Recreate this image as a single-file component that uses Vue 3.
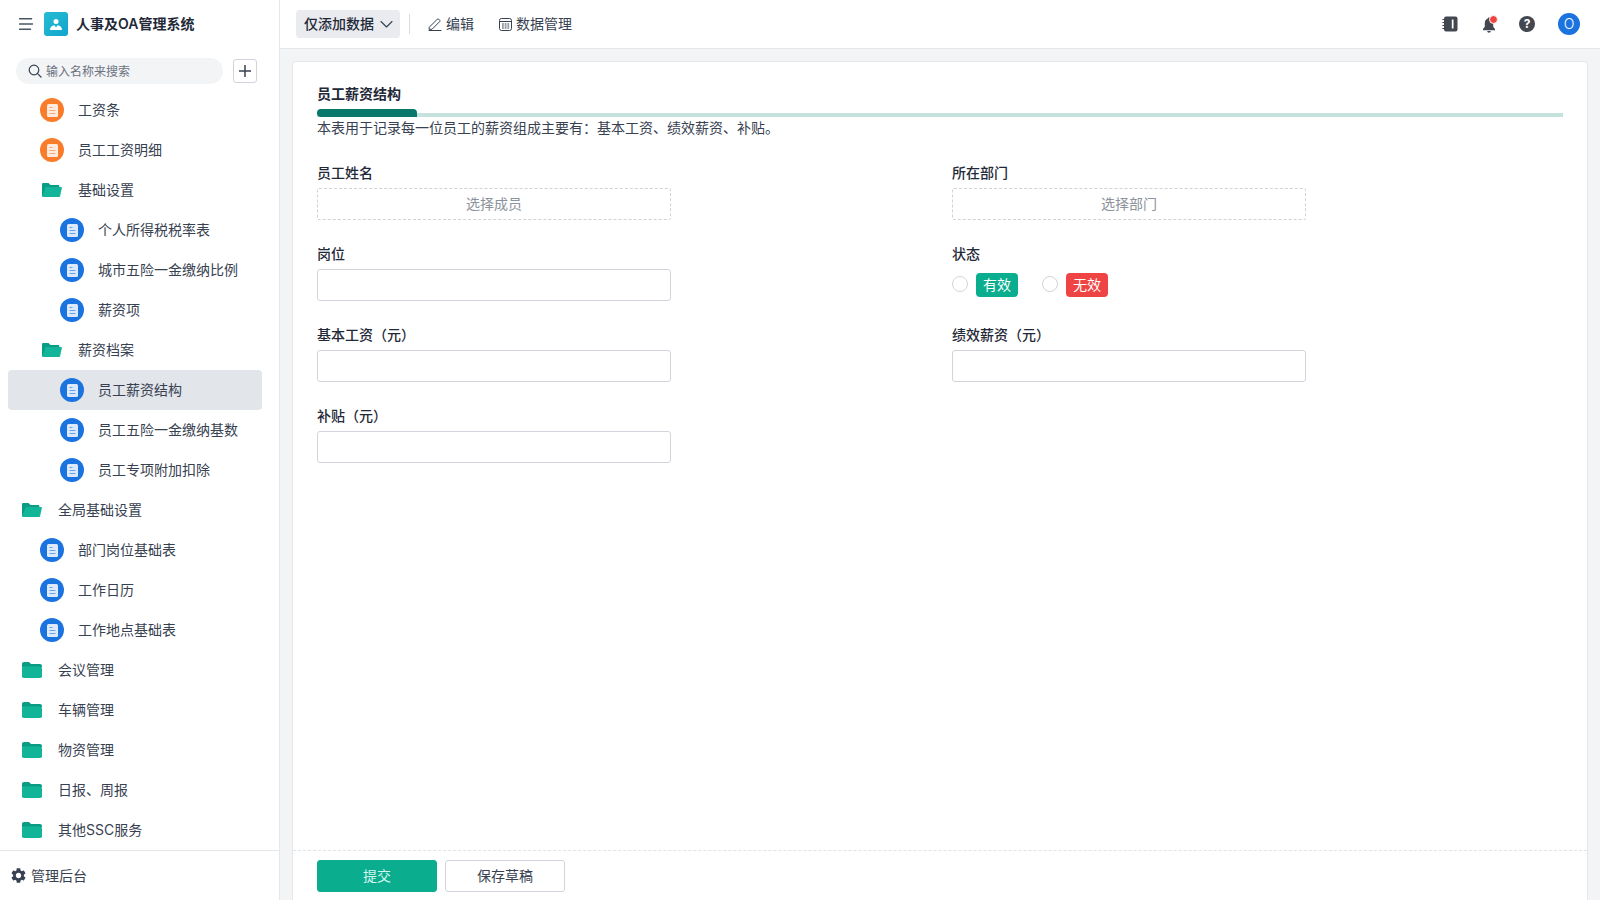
<script setup>
const tree = [
  { type: 'doc', color: 'orange', level: 1, name: '工资条' },
  { type: 'doc', color: 'orange', level: 1, name: '员工工资明细' },
  { type: 'open', level: 1, name: '基础设置' },
  { type: 'doc', color: 'blue', level: 2, name: '个人所得税税率表' },
  { type: 'doc', color: 'blue', level: 2, name: '城市五险一金缴纳比例' },
  { type: 'doc', color: 'blue', level: 2, name: '薪资项' },
  { type: 'open', level: 1, name: '薪资档案' },
  { type: 'doc', color: 'blue', level: 2, name: '员工薪资结构', active: true },
  { type: 'doc', color: 'blue', level: 2, name: '员工五险一金缴纳基数' },
  { type: 'doc', color: 'blue', level: 2, name: '员工专项附加扣除' },
  { type: 'open', level: 0, name: '全局基础设置' },
  { type: 'doc', color: 'blue', level: 1, name: '部门岗位基础表' },
  { type: 'doc', color: 'blue', level: 1, name: '工作日历' },
  { type: 'doc', color: 'blue', level: 1, name: '工作地点基础表' },
  { type: 'closed', level: 0, name: '会议管理' },
  { type: 'closed', level: 0, name: '车辆管理' },
  { type: 'closed', level: 0, name: '物资管理' },
  { type: 'closed', level: 0, name: '日报、周报' },
  { type: 'closed', level: 0, name: '其他SSC服务' },
]
</script>

<template>
  <div class="app">
    <aside class="sidebar">
      <div class="brand">
        <svg class="menu-icon" width="14" height="12" viewBox="0 0 14 12">
          <path d="M.6.7h12M.6 6h13M.6 11.300h11" stroke="#4b5563" stroke-width="1.400" stroke-linecap="round" fill="none" />
        </svg>
        <div class="logo">
          <svg width="12" height="11" viewBox="0 0 12 11" fill="#fff">
            <circle cx="6" cy="2.600" r="2.500" />
            <path d="M0 11c0-2.900 1.700-4.600 4.500-4.800L6 8.500l1.500-2.300C10.300 6.400 12 8.100 12 11z" />
          </svg>
        </div>
        <span class="brand-name">人事及OA管理系统</span>
      </div>
      <div class="search-row">
        <div class="search">
          <svg width="14" height="14" viewBox="0 0 14 14" fill="none" stroke="#374151" stroke-width="1.200">
            <circle cx="6" cy="6" r="4.800" />
            <path d="M9.600 9.600L13 13" stroke-linecap="round" />
          </svg>
          <span>输入名称来搜索</span>
        </div>
        <button class="add-btn">
          <svg width="14" height="14" viewBox="0 0 14 14">
            <path d="M7 1v12M1 7h12" stroke="#374151" stroke-width="1.500" />
          </svg>
        </button>
      </div>
      <nav class="tree">
        <div
          v-for="item in tree"
          :key="item.name"
          class="row"
          :class="['lv' + item.level, { active: item.active }]"
        >
          <span v-if="item.type === 'doc'" class="doc" :class="item.color">
            <svg width="11" height="13" viewBox="0 0 11 13">
              <rect width="11" height="13" rx="1.500" fill="#fff" fill-opacity=".85" />
              <path d="M2.500 3.500h3M2.500 6.500h6M2.500 9.500h6" stroke="currentColor" stroke-opacity=".6" stroke-width="1.200" />
            </svg>
          </span>
          <span v-else class="folder">
            <svg v-if="item.type === 'open'" width="20" height="14" viewBox="0 0 20 14">
              <path d="M0 1.200C0 .5.5 0 1.200 0h5.300l2 2h7.800c.6 0 1 .4 1 1v1.500H4.300L1.800 13.500H1.200C.5 13.500 0 13 0 12.300z" fill="#0a9c85" />
              <path d="M3.800 4h15.200c.6 0 1 .5.900 1.100l-1.800 7.900c-.1.600-.6 1-1.200 1H1c-.6 0-.9-.4-.8-1z" fill="#12b597" />
            </svg>
            <svg v-else width="20" height="16" viewBox="0 0 20 16">
              <path d="M0 2C0 .9.900 0 2 0h5l2 2h9c1.100 0 2 .9 2 2v1H0z" fill="#0a9c85" />
              <rect y="4.500" width="20" height="11.500" rx="1.800" fill="#12b597" />
            </svg>
          </span>
          <span class="row-label">{{ item.name }}</span>
        </div>
      </nav>
      <div class="side-foot">
        <svg width="15" height="15" viewBox="2.500 2 19 20" fill="#374151">
          <path d="M19.140 12.940c.04-.3.060-.61.060-.94 0-.32-.02-.64-.07-.94l2.030-1.580c.18-.14.23-.41.12-.61l-1.920-3.320c-.12-.22-.37-.29-.59-.22l-2.390.96c-.5-.38-1.030-.7-1.620-.94l-.36-2.540c-.04-.24-.24-.41-.48-.41h-3.840c-.24 0-.43.17-.47.41l-.36 2.540c-.59.24-1.130.57-1.620.94l-2.390-.96c-.22-.08-.47 0-.59.22L2.740 8.870c-.12.21-.08.47.12.61l2.030 1.580c-.05.3-.09.63-.09.94s.02.64.07.94l-2.030 1.580c-.18.14-.23.41-.12.61l1.920 3.320c.12.22.37.29.59.22l2.390-.96c.5.38 1.030.7 1.620.94l.36 2.540c.05.24.24.41.48.41h3.840c.24 0 .44-.17.47-.41l.36-2.540c.59-.24 1.130-.56 1.620-.94l2.390.96c.22.08.47 0 .59-.22l1.920-3.320c.12-.22.070-.47-.12-.61l-2.010-1.580zM12 15.600c-1.980 0-3.600-1.620-3.600-3.600s1.620-3.600 3.600-3.600 3.600 1.620 3.600 3.600-1.620 3.600-3.600 3.600z" />
        </svg>
        <span>管理后台</span>
      </div>
    </aside>

    <div class="main">
      <header class="topbar">
        <div class="view-select">
          <span>仅添加数据</span>
          <svg width="13" height="8" viewBox="0 0 13 8" fill="none" stroke="#374151" stroke-width="1.100">
            <path d="M1 1.500l5.500 5.500 5.500-5.500" stroke-linecap="round" stroke-linejoin="round" />
          </svg>
        </div>
        <div class="divider"></div>
        <div class="tool">
          <svg width="14" height="14" viewBox="0 0 14 14" fill="none" stroke="#374151" stroke-width="1">
            <path d="M1.500 10L9.300 2.200a1 1 0 011.400 0l1 1a1 1 0 010 1.400L4 12.300H1.500zM1 13.500h12" stroke-linejoin="round" stroke-linecap="round" />
          </svg>
          <span>编辑</span>
        </div>
        <div class="tool">
          <svg width="13" height="13" viewBox="0 0 13 13" fill="none" stroke="#374151" stroke-width="1">
            <rect x="0.500" y="0.500" width="12" height="12" rx="2" />
            <path d="M.5 3.500h12" />
            <path d="M3 6h1.800M5.700 6h1.800M8.400 6h1.800M3 8h1.800M5.700 8h1.800M8.400 8h1.800M3 10h1.800M5.700 10h1.800M8.400 10h1.800" stroke-width="1.200" />
          </svg>
          <span>数据管理</span>
        </div>
        <div class="top-right">
          <svg class="notebook" width="16" height="16" viewBox="0 0 16 16">
            <rect x="2" y="0.500" width="13.500" height="15" rx="2" fill="#434750" />
            <path d="M.8 3.500h2.500M.8 6.500h2.500M.8 9.500h2.500M.8 12.500h2.500" stroke="#434750" stroke-width="1.200" stroke-linecap="round" />
            <rect x="9.800" y="3.500" width="1.700" height="9" fill="#fff" />
          </svg>
          <div class="bell">
            <svg width="14" height="17" viewBox="0 0 14 17" fill="#434750">
              <path d="M7 1.500c-.7 0-1.200.5-1.200 1.100C3.800 3.200 2.800 5 2.800 7v3.700L1 13v1.200h12V13l-1.800-2.300V7c0-2-1-3.800-3-4.400 0-.6-.5-1.100-1.200-1.100zM5.200 15h3.600a1.800 1.800 0 01-3.600 0z" />
            </svg>
            <i class="dot"></i>
          </div>
          <div class="help">?</div>
          <div class="avatar">O</div>
        </div>
      </header>

      <div class="content">
        <section class="card">
          <div class="card-body">
            <div class="tab-title">员工薪资结构</div>
            <div class="tab-line"><i></i></div>
            <p class="desc">本表用于记录每一位员工的薪资组成主要有：基本工资、绩效薪资、补贴。</p>

            <div class="form">
              <div class="field">
                <label>员工姓名</label>
                <div class="picker">选择成员</div>
              </div>
              <div class="field">
                <label>所在部门</label>
                <div class="picker">选择部门</div>
              </div>
              <div class="field">
                <label>岗位</label>
                <input type="text" />
              </div>
              <div class="field">
                <label>状态</label>
                <div class="status">
                  <span class="radio"></span>
                  <span class="tag green">有效</span>
                  <span class="radio second"></span>
                  <span class="tag red">无效</span>
                </div>
              </div>
              <div class="field">
                <label>基本工资（元）</label>
                <input type="text" />
              </div>
              <div class="field">
                <label>绩效薪资（元）</label>
                <input type="text" />
              </div>
              <div class="field">
                <label>补贴（元）</label>
                <input type="text" />
              </div>
            </div>
          </div>
          <footer class="card-foot">
            <button class="btn primary">提交</button>
            <button class="btn">保存草稿</button>
          </footer>
        </section>
      </div>
    </div>
  </div>
</template>

<style>
html, body { margin: 0; height: 100%; overflow: hidden; }
</style>

<style scoped>
.app {
  display: flex;
  width: 1600px;
  height: 900px;
  font-family: Inter, "Noto Sans CJK SC", sans-serif;
  font-size: 14px;
  color: #1f2937;
  background: #f3f4f6;
}

.sidebar {
  width: 279px;
  flex: none;
  display: flex;
  flex-direction: column;
  background: #fff;
  border-right: 1px solid #e5e7eb;
}

.brand {
  height: 48px;
  flex: none;
  display: flex;
  align-items: center;
  padding-left: 19px;
}
.menu-icon { margin-right: 11px; }
.logo {
  width: 24px;
  height: 24px;
  border-radius: 3px;
  background: linear-gradient(135deg, #27bcd2, #10a5cc);
  display: flex;
  align-items: center;
  justify-content: center;
  margin-right: 8px;
}
.brand-name { font-weight: 600; color: #1f2937; margin-bottom: 2px; }

.search-row {
  height: 42px;
  flex: none;
  display: flex;
  align-items: flex-start;
  padding: 10px 0 0 16px;
  box-sizing: border-box;
}
.search {
  width: 207px;
  height: 26px;
  border-radius: 13px;
  background: #f3f4f6;
  display: flex;
  align-items: center;
  gap: 4px;
  padding-left: 12px;
  box-sizing: border-box;
  font-size: 12px;
  color: #6b7280;
}
.search span { margin-bottom: 2px; }
.add-btn {
  width: 24px;
  height: 24px;
  margin: 1px 0 0 10px;
  padding: 0;
  background: #fff;
  border: 1px solid #d1d5db;
  border-radius: 3px;
  display: flex;
  align-items: center;
  justify-content: center;
}

.tree {
  flex: 1;
  overflow: hidden;
  padding: 0 8px;
}
.row {
  height: 40px;
  box-sizing: border-box;
  display: flex;
  align-items: center;
  border-radius: 4px;
  width: 254px;
  color: #374151;
}
.row.active { background: #e2e5e9; }
.lv0 { padding-left: 14px; }
.lv1 { padding-left: 34px; }
.lv2 { padding-left: 52px; }
.row.lv1 .doc { margin-left: -2px; }
.row-label { margin-bottom: 2px; }

.doc {
  width: 24px;
  height: 24px;
  border-radius: 50%;
  display: flex;
  align-items: center;
  justify-content: center;
  margin-right: 14px;
  flex: none;
}
.doc.orange { background: #f97c2b; color: #f97c2b; }
.doc.blue { background: #1b73e0; color: #1b73e0; }
.folder {
  width: 20px;
  margin-right: 16px;
  flex: none;
  display: flex;
}

.side-foot {
  height: 50px;
  box-sizing: border-box;
  flex: none;
  display: flex;
  align-items: center;
  gap: 5px;
  padding-left: 11px;
  border-top: 1px solid #e5e7eb;
  color: #374151;
}
.side-foot span { margin-bottom: 2px; }

.main {
  flex: 1;
  min-width: 0;
  display: flex;
  flex-direction: column;
}

.topbar {
  height: 49px;
  flex: none;
  box-sizing: border-box;
  background: #fff;
  border-bottom: 1px solid #e5e7eb;
  display: flex;
  align-items: center;
  padding: 0 20px 0 16px;
}
.view-select {
  height: 28px;
  padding: 0 7px 0 8px;
  background: #e9ebef;
  border-radius: 4px;
  display: flex;
  align-items: center;
  gap: 6px;
  font-weight: 500;
  color: #1f2937;
}
.view-select span, .tool span { margin-bottom: 2px; }
.divider {
  width: 1px;
  height: 20px;
  background: #d9dce1;
  margin: 0 10px 0 9px;
}
.tool {
  display: flex;
  align-items: center;
  gap: 4px;
  height: 28px;
  padding: 0 8px;
  margin-right: 9px;
  font-size: 14px;
  color: #374151;
}
.top-right {
  margin-left: auto;
  display: flex;
  align-items: center;
  gap: 23px;
}
.notebook { margin-right: 1px; }
.bell { position: relative; display: flex; }
.dot {
  position: absolute;
  top: -1px;
  right: -2px;
  width: 7px;
  height: 7px;
  border-radius: 50%;
  background: #ef4444;
  border: 1px solid #fff;
}
.help {
  width: 16px;
  height: 16px;
  border-radius: 50%;
  background: #434750;
  color: #fff;
  font-size: 12px;
  font-weight: 700;
  line-height: 16px;
  text-align: center;
}
.avatar {
  width: 22px;
  height: 22px;
  border-radius: 50%;
  background: #1b73e0;
  color: #fff;
  font-size: 14px;
  font-weight: 300;
  line-height: 22px;
  text-align: center;
}

.content {
  flex: 1;
  min-height: 0;
  padding: 12px 12px 0;
  display: flex;
}
.card {
  flex: 1;
  display: flex;
  flex-direction: column;
  background: #fff;
  border: 1px solid #e5e7eb;
  border-bottom: none;
  border-radius: 4px 4px 0 0;
}
.card-body {
  flex: 1;
  padding: 22px 24px 0;
}
.tab-title {
  font-weight: 600;
  line-height: 20px;
  color: #1f2937;
}
.tab-line {
  position: relative;
  height: 4px;
  margin-top: 9px;
  background: #c6e2dc;
}
.tab-line i {
  position: absolute;
  left: 0;
  top: -4px;
  width: 100px;
  height: 8px;
  background: #08786a;
  border-radius: 6px 6px 0 6px;
}
.desc {
  margin: 1px 0 0;
  line-height: 20px;
  color: #374151;
}

.form {
  display: grid;
  grid-template-columns: 354px 354px;
  column-gap: 281px;
  row-gap: 24px;
  margin-top: 25px;
}
.field label {
  display: block;
  font-weight: 500;
  line-height: 20px;
  margin-bottom: 5px;
  color: #1f2937;
}
.field input, .picker {
  display: block;
  width: 100%;
  height: 32px;
  box-sizing: border-box;
  border-radius: 2px;
  outline: none;
}
.field input {
  border: 1px solid #d1d5db;
  border-radius: 3px;
  background: #fff;
  padding: 0 8px;
}
.picker {
  border: 1px dashed #cfd3d8;
  text-align: center;
  line-height: 30px;
  color: #8c929b;
}
.status {
  height: 32px;
  display: flex;
  align-items: center;
}
.radio {
  width: 16px;
  height: 16px;
  box-sizing: border-box;
  border: 1px solid #d1d5db;
  border-radius: 50%;
  margin-right: 8px;
  margin-top: -3px;
}
.radio.second { margin-left: 24px; }
.tag {
  width: 42px;
  height: 24px;
  border-radius: 4px;
  color: #fff;
  line-height: 24px;
  text-align: center;
}
.tag.green { background: #0aae8f; }
.tag.red { background: #ef4444; }

.card-foot {
  flex: none;
  height: 50px;
  box-sizing: border-box;
  border-top: 1px dashed #e0e3e7;
  display: flex;
  gap: 8px;
  padding: 9px 24px 0;
}
.btn {
  width: 120px;
  height: 32px;
  padding: 0 0 2px;
  border: 1px solid #d1d5db;
  border-radius: 3px;
  background: #fff;
  font: inherit;
  color: #374151;
}
.btn.primary {
  background: #0aae8f;
  border-color: #0aae8f;
  color: #d6f5ee;
}
</style>
